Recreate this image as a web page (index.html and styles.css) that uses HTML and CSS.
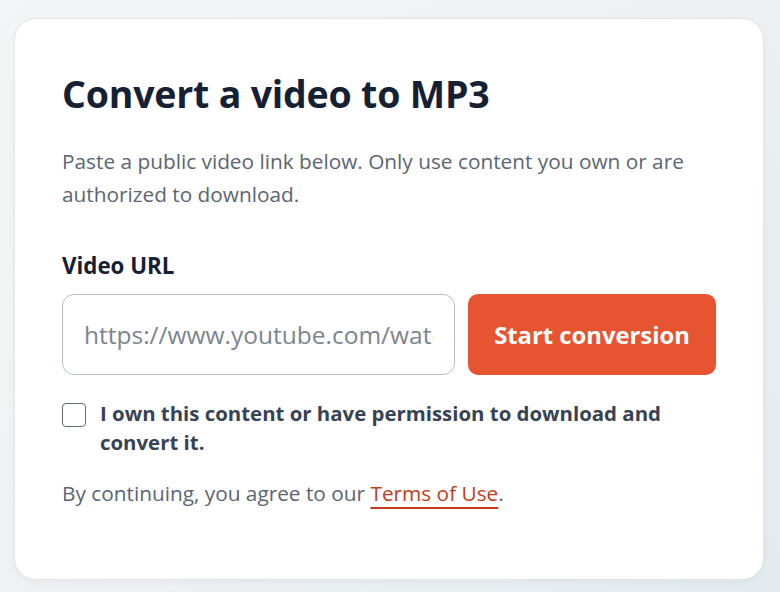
FILE: index.html
```html
<!DOCTYPE html>
<html lang="en">
<head>
<meta charset="utf-8">
<title>Convert a video to MP3</title>
<link rel="stylesheet" href="styles.css">
</head>
<body>
<main class="card">
  <h1 class="title">Convert a video to MP3</h1>
  <p class="lead">Paste a public video link below. Only use content you own or are authorized to download.</p>
  <form class="form">
    <label class="label" for="url">Video URL</label>
    <div class="row">
      <input class="input" id="url" type="text" placeholder="https://www.youtube.com/watch?v=">
      <button class="btn" type="button">Start conversion</button>
    </div>
    <label class="check">
      <span class="box"></span>
      <span class="check-text">I own this content or have permission to download and convert it.</span>
    </label>
    <p class="terms">By continuing, you agree to our <a href="#" class="link">Terms of Use</a>.</p>
  </form>
</main>
</body>
</html>
```

FILE: styles.css
```css
html, body {
  margin: 0;
  height: 100%;
}
body {
  background: linear-gradient(135deg, #f4f5f6 0%, #eef1f3 50%, #e3ebee 100%);
  padding: 18px 14px 12px;
  box-sizing: border-box;
  font-family: "Open Sans", "Noto Sans", sans-serif;
}
.card {
  box-sizing: border-box;
  width: 750px;
  height: 562px;
  background: #ffffff;
  border: 1px solid #dfe5ea;
  border-radius: 22px;
  padding: 52px 47px 40px;
  box-shadow: 0 2px 6px rgba(40, 60, 80, 0.05);
}
.title {
  margin: 0;
  font-size: 37.5px;
  line-height: 46px;
  font-weight: 700;
  color: #152033;
  letter-spacing: -0.2px;
}
.lead {
  margin: 28px 0 0;
  font-size: 20.8px;
  line-height: 33px;
  color: #5b6573;
}
.form {
  margin-top: 41px;
}
.label {
  display: block;
  font-size: 22.3px;
  line-height: 28px;
  font-weight: 700;
  color: #152033;
}
.row {
  display: flex;
  gap: 13px;
  margin-top: 14px;
}
.input {
  box-sizing: border-box;
  width: 393px;
  height: 81px;
  border: 1px solid #b5bec9;
  border-radius: 12px;
  padding: 0 21px;
  font-family: inherit;
  font-size: 24.5px;
  color: #152033;
  background: #fff;
  outline: none;
}
.input::placeholder {
  color: #7c848e;
}
.btn {
  box-sizing: border-box;
  width: 248px;
  height: 81px;
  border: 0;
  border-radius: 10px;
  background: #e65431;
  color: #ffffff;
  font-family: inherit;
  font-size: 23.8px;
  font-weight: 700;
}
.check {
  display: flex;
  align-items: flex-start;
  gap: 14px;
  margin-top: 24px;
}
.box {
  flex: none;
  box-sizing: border-box;
  width: 24px;
  height: 24px;
  border: 1.5px solid #636b75;
  border-radius: 4px;
  margin-top: 4px;
}
.check-text {
  font-size: 20.4px;
  line-height: 29px;
  font-weight: 700;
  color: #374253;
}
.terms {
  margin: 21px 0 0;
  font-size: 20.8px;
  line-height: 30px;
  color: #5b6573;
}
.link {
  color: #c23b1c;
  text-decoration: underline;
  text-decoration-thickness: 2px;
  text-underline-offset: 6px;
}
```
